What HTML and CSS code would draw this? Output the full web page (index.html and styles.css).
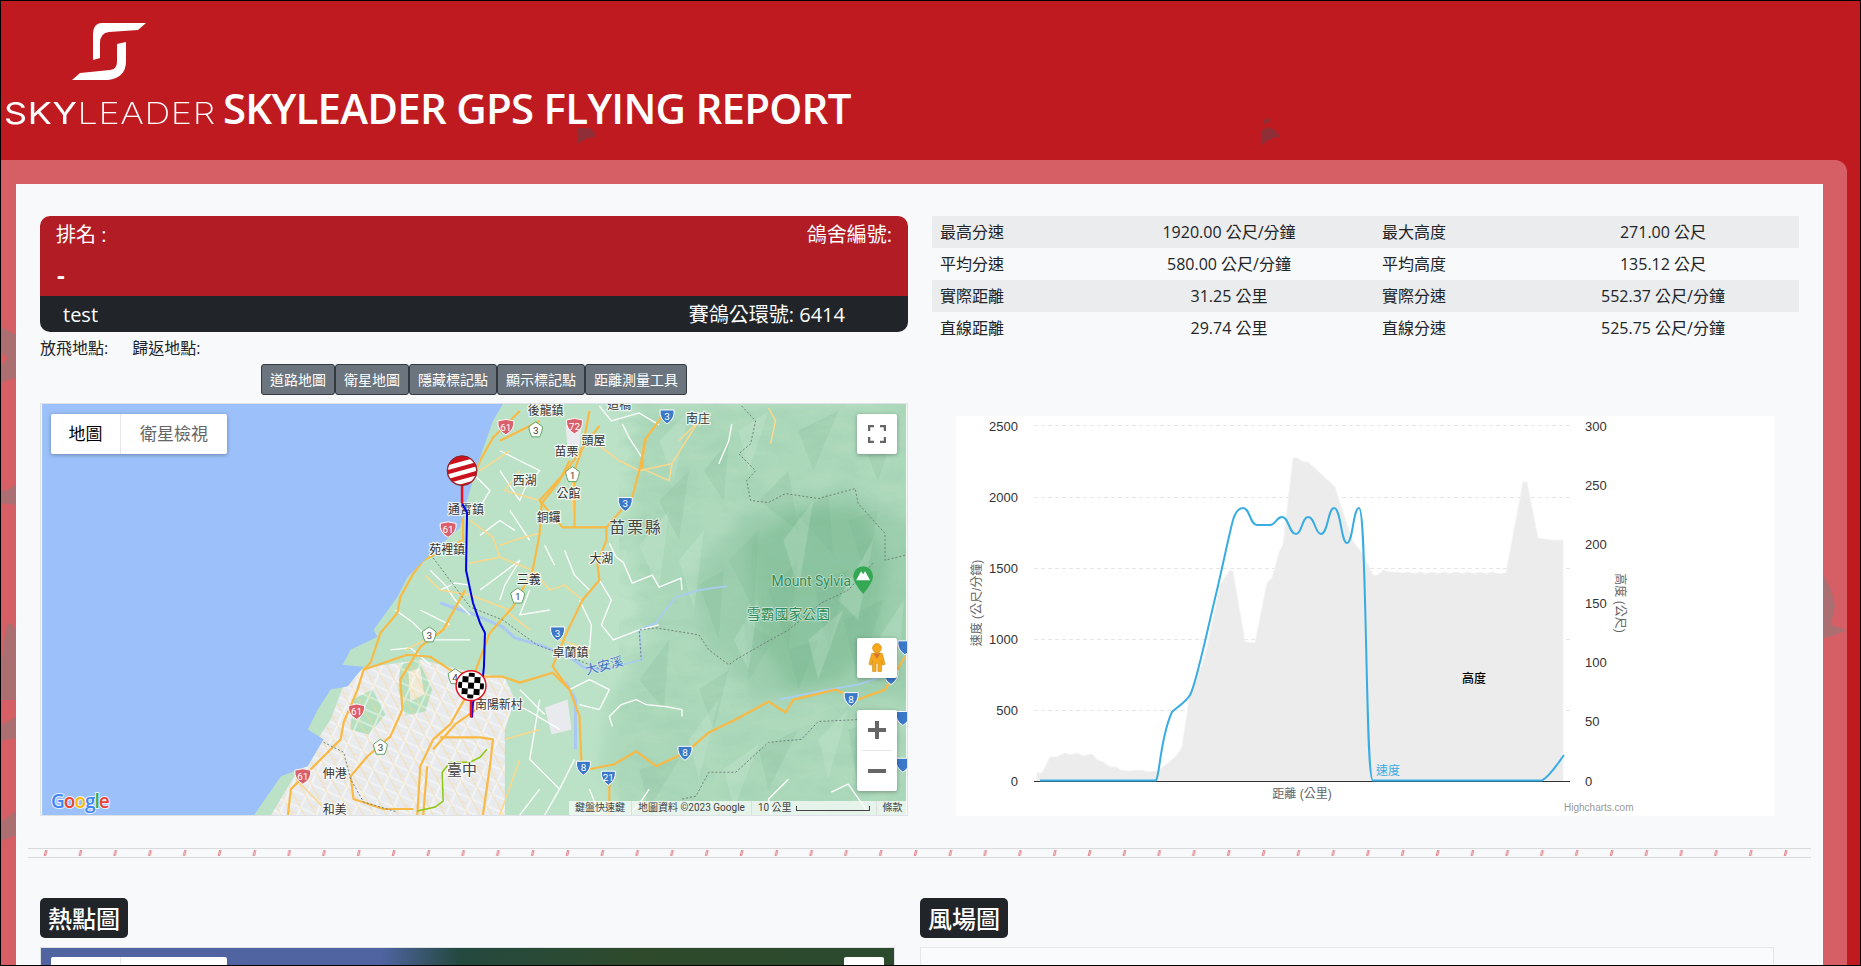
FILE: index.html
```html
<!DOCTYPE html>
<html lang="zh-Hant">
<head>
<meta charset="utf-8">
<title>SKYLEADER GPS FLYING REPORT</title>
<link rel="stylesheet" href="styles.css">
</head>
<body>
<div class="frame">
  <svg class="birds" viewBox="0 0 1859 964" aria-hidden="true">
    <g class="bird-dark" transform="translate(-1 -1)">
      <path d="M577 128H588Q595 130 596 137Q585 137 577 145Z"/>
      <path d="M1263 120L1270 118V122L1263 124ZM1262 130L1268 127Q1278 130 1280 137Q1270 137 1262 145Z"/>
    </g>
    <g class="bird-soft" transform="translate(-1 -1)">
      <path d="M1 327L16 335V378Q8 379 1 383V366L8 358L1 352Z"/>
      <path d="M1 491L8 490L16 484V505L1 503Z"/>
      <path d="M2 700V660Q5 625 9 623Q14 625 16 632V700Z"/>
      <path d="M1 725L16 717V738L1 741Z"/>
      <path d="M1 822L16 811V835L1 841Z"/>
      <path d="M1823 575Q1833 590 1835 606L1831 625L1846 630Q1838 635 1823 638Z"/>
    </g>
  </svg>

  <header class="top">
    <div class="brand">
      <svg class="brand-mark" viewBox="72 24 74 58" aria-hidden="true">
        <path d="M146 24H102Q93 24 93 36V61L100 59V44Q100 34 109 33L138 31Z"/>
        <path d="M126 43L117 45V63Q117 70 110 71L80 74L72 81H108Q126 79 126 62Z"/>
      </svg>
      <div class="brand-name">SKY<span class="brand-thin">LEADER</span></div>
    </div>
    <h1 class="title">SKYLEADER GPS FLYING REPORT</h1>
  </header>

  <main class="card">
    <div class="content">
      <section class="overview">
        <div class="col-left">
          <div class="panel">
            <div class="panel-red">
              <div class="panel-row"><span>排名 :</span><span>鴿舍編號:</span></div>
              <div class="panel-row"><span class="dash">-</span></div>
            </div>
            <div class="panel-dark"><span>test</span><span>賽鴿公環號: 6414</span></div>
          </div>
          <div class="places"><span>放飛地點:</span><span>歸返地點:</span></div>
          <div class="btn-row">
            <button class="btn">道路地圖</button><button class="btn">衛星地圖</button><button class="btn">隱藏標記點</button><button class="btn">顯示標記點</button><button class="btn">距離測量工具</button>
          </div>
          <div class="map">
            <svg class="map-svg" viewBox="40 403 868 413" aria-hidden="true">
              <defs>
                <clipPath id="landClip"><path d="M503 403L493 420L480 457L467 500L460 527L427 557L407 577L397 597L373 630L377 637L350 650L342 665L363 667L347 687L330 690L317 710L307 730L323 740L307 767L280 777L253 816H908V403Z"/></clipPath>
                <clipPath id="cityClip"><path d="M345 680L365 668L420 660L470 672L505 678L515 700L505 730L505 816H270L310 750L330 720Z"/></clipPath>
                <filter id="soft" x="-10%" y="-10%" width="120%" height="120%"><feGaussianBlur stdDeviation="7"/></filter>
                <filter id="terrain" x="0" y="0" width="100%" height="100%">
                  <feTurbulence type="fractalNoise" baseFrequency="0.03 0.06" numOctaves="3" seed="11"/>
                  <feComponentTransfer>
                    <feFuncR type="discrete" tableValues="0.3"/>
                    <feFuncG type="discrete" tableValues="0.58"/>
                    <feFuncB type="discrete" tableValues="0.4"/>
                    <feFuncA type="discrete" tableValues="0 0 0 0.06 0.14 0.22 0.3 0.36"/>
                  </feComponentTransfer>
                </filter>
                <pattern id="cityGrid" width="17" height="13" patternUnits="userSpaceOnUse" patternTransform="rotate(24)">
                  <path class="grid-white" d="M0 6H17M8 0V13"/>
                  <path class="grid-orange" d="M0 0L17 13M0 13H6"/>
                </pattern>
                <g id="s-red"><path class="shield-red" d="M-8-6Q0-9 8-6Q9 3 0 8Q-9 3-8-6Z"/></g>
                <g id="s-blue"><path class="shield-blue" d="M-7-6H7Q8 3 0 8Q-8 3-7-6Z"/></g>
                <g id="s-flower"><path class="shield-flower" d="M0-8L3-6L7-3L6 2L4 7H-4L-6 2L-7-3L-3-6Z"/></g>
              </defs>
              <rect class="sea" x="40" y="403" width="868" height="413"/>
              <g clip-path="url(#landClip)">
                <rect class="land" x="240" y="403" width="668" height="413"/>
                <g filter="url(#soft)">
                  <path class="hill" d="M640 403H930V830H640L600 770L610 700L650 640L640 590L630 520Z"/>
                  <path class="hill2" d="M690 580L750 510L850 490L930 530V700L830 695L760 700L705 640Z"/>
                  <path class="hill3" d="M750 540L800 510L860 505L890 560L880 640L840 680L790 690L760 640Z"/>
                </g>
                <rect class="texture" x="620" y="403" width="288" height="413" filter="url(#terrain)"/>
                <g class="facet-d">
                  <path d="M760 500L790 470L800 530Z"/><path d="M800 515L830 492L835 555Z"/><path d="M850 520L880 510L868 575Z"/><path d="M730 560L760 530L755 610Z"/>
                  <path d="M770 590L800 560L790 650Z"/><path d="M815 580L850 570L830 650Z"/><path d="M845 620L885 600L860 680Z"/><path d="M790 650L820 640L800 690Z"/>
                  <path d="M700 585L725 570L720 640Z"/><path d="M745 620L775 640L750 680Z"/><path d="M660 500L690 470L680 540Z"/><path d="M705 470L730 440L725 500Z"/>
                  <path d="M640 680L670 640L665 710Z"/><path d="M700 690L730 670L715 730Z"/><path d="M760 750L800 730L770 790Z"/><path d="M850 730L890 720L860 790Z"/><path d="M640 770L680 760L650 810Z"/><path d="M800 430L840 410L815 470Z"/><path d="M860 430L900 420L880 480Z"/>
                </g>
                <g class="facet-l">
                  <path d="M785 540L815 500L800 590Z"/><path d="M840 600L875 540L860 620Z"/><path d="M735 640L760 600L750 670Z"/><path d="M810 640L845 610L820 680Z"/><path d="M680 560L705 530L695 610Z"/>
                  <path d="M640 545L670 510L660 590Z"/><path d="M690 740L720 700L700 780Z"/><path d="M740 430L770 410L750 470Z"/><path d="M880 640L906 600L900 680Z"/><path d="M820 740L850 710L830 780Z"/><path d="M725 770L760 745L735 810Z"/><path d="M660 440L690 410L675 480Z"/>
                </g>
                <path class="urban" d="M345 680L365 668L420 660L470 672L505 678L515 700L505 730L505 816H270L310 750L330 720Z"/>
                <path class="urban" d="M545 708L568 700L572 730L552 735Z"/>
                <path class="urban" d="M566 425L582 422L580 445L568 448Z"/>
                <path class="park" d="M400 665L418 660L432 690L425 712L405 716L398 690Z"/>
                <path class="park" d="M352 700L372 690L385 715L368 735L350 730Z"/>
                <path class="beige" d="M408 672L420 668L424 695L410 702Z"/>
                <rect class="city-grid" x="270" y="655" width="250" height="165" fill="url(#cityGrid)" clip-path="url(#cityClip)"/>

                <g class="river">
                  <path d="M677 597L665 612L657 623L640 630L643 660L603 670"/>
                  <path d="M677 597L700 590L728 586" />
                  <path d="M780 700L830 690L860 685L890 675"/>
                </g>
                <g class="river-wide">
                  <path d="M603 670L585 668L570 657L540 645L515 638L503 627L470 613L440 603"/>
                  <path d="M566 682L576 700L576 750"/>
                </g>

                <g class="roads-white">
                  <path d="M610 543L617 557L624 562L633 583L653 575L660 587L682 578L683 590"/>
                  <path d="M613 727L610 717L622 705L637 700L647 705L667 707L683 710L683 717"/>
                  <path d="M733 423L730 440L720 463M623 423L630 437L643 457M600 405L612 420L640 412L660 424"/>
                  <path d="M833 793L850 785L870 813M790 780L770 800L772 815M650 790L640 805L630 815M590 790L600 815"/>
                  <path d="M640 630L660 625M600 580L612 600L602 625L614 640L640 630M580 600L592 625L590 650"/>
                  <path d="M430 570L445 585L455 600L470 615M440 590L455 583L470 585M395 610L412 622L430 640L470 640M390 650L410 648L430 665M420 610L450 625"/>
                  <path d="M500 450L520 460L540 470L525 488L520 500L500 470M510 510L520 525L530 540M480 590L500 575L520 560L505 585L500 600M480 535L500 520L515 530M470 470L490 490L478 510"/>
                  <path d="M530 590L520 615L550 610M565 550L575 575L590 590M545 545L555 565"/>
                  <path d="M570 690L590 680L610 690L600 710L580 705M540 700L530 760L560 790L575 760M505 700L530 712L560 730M520 690L545 715M540 790L520 816M560 790L545 816"/>
                </g>
                <g class="roads-thin">
                  <path d="M470 563L485 560L500 557L533 570L550 590L565 585L583 600M470 520L493 537L500 557M500 545L520 538L540 533"/>
                  <path d="M575 527L573 500L573 480M540 500L505 490L520 470M510 450L480 470M600 445L620 460L640 470L673 463"/>
                  <path d="M680 440L700 420L687 440L673 463L670 480L643 468"/>
                  <path d="M770 407L777 420L772 443"/>
                  <path d="M510 610L470 595L440 590L425 575M450 625L425 640L405 650"/>
                  <path d="M540 730L505 740M520 760L500 816M295 780L330 816M505 610L530 630M560 640L590 650"/>
                </g>
                <g class="roads-main">
                  <path d="M520 410L493 437L480 460L463 503L463 540L423 560L412 575L400 597L397 613L380 633L370 663L363 670L357 690L343 723L340 740L313 767L290 790L287 816"/>
                  <path d="M570 460L560 480L542 503L540 533L533 570L513 607L490 633L477 667L470 690L450 725L433 740L420 767L417 816"/>
                  <path d="M647 437L640 470L633 497L607 527L563 527L540 500L567 470L583 447L600 425"/>
                  <path d="M607 527L607 540L598 563L600 580L583 600L567 633L553 667L570 690L580 717L582 763"/>
                  <path d="M465 590L443 630L420 647L400 680L402 710L390 737L367 757L350 777L353 800L383 810L413 810"/>
                  <path d="M363 670L407 655L430 657L453 672L480 677L503 677L520 683L553 673L570 690"/>
                  <path d="M427 767L423 816M440 738H480L493 740L490 767L483 816M483 705L455 725L433 750"/>
                  <path d="M590 770L615 765L637 752L657 767L687 753L710 733L737 720L770 702L787 713L795 700L837 690L860 700L887 690L907 657"/>
                  <path d="M667 410L645 440L643 468M610 780V816"/>
                  <path d="M540 420L500 440M590 410L583 447L575 470L575 527"/>
                </g>
                <path class="metro" d="M417 812L435 808L443 802L442 773L450 763L470 763L480 758L487 750"/>
                <g class="border-line">
                  <path d="M743 405L757 420L752 443L740 453L757 470L748 480L752 500L770 502L787 493L820 498L857 488L860 503L887 533L887 560L907 555"/>
                  <path d="M875 563L850 590L823 603L790 630L763 645L737 660L730 665L710 650L700 635L657 628L640 630L642 660M603 670L570 657L537 645L503 620L470 607L437 563L427 550"/>
                  <path d="M907 718L820 722L803 740L770 743L737 773L710 773L697 797L683 800"/>
                  <path d="M323 743L343 753L350 780L363 803L397 813"/>
                </g>
              </g>

              <use href="#s-red" x="448" y="529"/><use href="#s-red" x="356" y="712"/><use href="#s-red" x="302" y="777"/><use href="#s-red" x="506" y="426"/><use href="#s-red" x="575" y="425"/>
              <use href="#s-flower" x="429" y="635"/><use href="#s-flower" x="380" y="748"/><use href="#s-flower" x="536" y="429"/><use href="#s-flower" x="573" y="474"/><use href="#s-flower" x="518" y="596"/><use href="#s-flower" x="455" y="677"/>
              <use href="#s-blue" x="668" y="415"/><use href="#s-blue" x="626" y="503"/><use href="#s-blue" x="558" y="633"/><use href="#s-blue" x="853" y="699"/><use href="#s-blue" x="686" y="753"/><use href="#s-blue" x="584" y="768"/><use href="#s-blue" x="609" y="778"/><use href="#s-blue" x="905" y="765"/><use href="#s-blue" x="907" y="647"/><use href="#s-blue" x="893" y="677"/><use href="#s-blue" x="905" y="718"/>
              <g class="num-white">
                <text x="448" y="533">61</text><text x="356" y="716">61</text><text x="302" y="781">61</text><text x="506" y="430">61</text><text x="575" y="429">72</text>
                <text x="668" y="419">3</text><text x="626" y="507">3</text><text x="558" y="637">3</text><text x="853" y="703">8</text><text x="686" y="757">8</text><text x="584" y="772">8</text><text x="609" y="782">21</text>
              </g>
              <g class="num-green">
                <text x="429" y="639">3</text><text x="380" y="752">3</text><text x="536" y="433">3</text><text x="573" y="478">1</text><text x="518" y="600">1</text><text x="455" y="681">4</text>
              </g>

              <g class="lbl">
                <text x="448" y="514">通霄鎮</text><text x="429" y="554">苑裡鎮</text><text x="322" y="779">伸港</text><text x="322" y="815">和美</text>
                <text x="528" y="414">後龍鎮</text><text x="582" y="444">頭屋</text><text x="555" y="455">苗栗</text><text x="513" y="484">西湖</text><text x="557" y="497">公館</text><text x="537" y="522">銅鑼</text>
                <text x="590" y="563">大湖</text><text x="517" y="584">三義</text><text x="553" y="657">卓蘭鎮</text><text x="687" y="422">南庄</text><text x="475" y="709">南陽新村</text><text x="608" y="408">造橋</text>
              </g>
              <text class="lbl-big" x="447" y="776">臺中</text>
              <text class="lbl-county" x="610" y="533">苗栗縣</text>
              <text class="lbl-river" transform="translate(587 675) rotate(-14)">大安溪</text>
              <text class="lbl-park" x="773" y="586">Mount Sylvia</text>
              <text class="lbl-park-cjk" x="748" y="619">雪霸國家公園</text>
              <path class="poi-pin" d="M865 566a10 10 0 0 1 10 10q0 6-10 18q-10-12-10-18a10 10 0 0 1 10-10Z"/>
              <path class="poi-peak" d="M858 580L863 571L865 574L867 571L872 580Z"/>

              <path class="route" d="M462 503L467 512L466 570L473 603L480 623L485 633L484 667L483 677L473 703L472 718"/>
              <path class="pin-line" d="M462 485V503"/>
              <path class="pin-line" d="M471 700V718"/>
              <circle class="m-red" cx="462" cy="470" r="15"/>
              <clipPath id="m1"><circle cx="462" cy="470" r="14"/></clipPath>
              <g clip-path="url(#m1)" class="m-stripes">
                <path d="M444 468L480 458M444 477L480 467M444 486L480 476"/>
              </g>
              <circle class="m-white" cx="471" cy="686" r="15"/>
              <clipPath id="m2"><circle cx="471" cy="686" r="13"/></clipPath>
              <g clip-path="url(#m2)"><g transform="rotate(4 471 686)">
                <path class="m-check" d="M456 671h6v6h-6zM468 671h6v6h-6zM480 671h6v6h-6zM462 677h6v6h-6zM474 677h6v6h-6zM456 683h6v6h-6zM468 683h6v6h-6zM480 683h6v6h-6zM462 689h6v6h-6zM474 689h6v6h-6zM456 695h6v6h-6zM468 695h6v6h-6zM480 695h6v6h-6z"/>
              </g></g>
            </svg>

            <div class="map-type"><span class="mt-on">地圖</span><span class="mt-off">衛星檢視</span></div>
            <div class="map-fs">
              <svg viewBox="0 0 18 18" aria-hidden="true"><path d="M1 6V1H6M12 1H17V6M17 12V17H12M6 17H1V12"/></svg>
            </div>
            <div class="map-peg">
              <svg viewBox="0 0 20 32" aria-hidden="true">
                <circle class="peg-body" cx="10" cy="5" r="5"/>
                <path class="peg-body" d="M4 11Q10 9 16 11L19 23L16 24L15 19V31H11V22H9V31H5V19L4 24L1 23Z"/>
                <path class="peg-neck" d="M6 11H14L10 17Z"/>
              </svg>
            </div>
            <div class="map-zoom">
              <div class="zoom-btn"><svg viewBox="0 0 18 18" aria-hidden="true"><path d="M0 7h7V0h4v7h7v4h-7v7H7v-7H0z"/></svg></div>
              <div class="zoom-btn zoom-minus"><svg viewBox="0 0 18 18" aria-hidden="true"><path d="M0 7h18v4H0z"/></svg></div>
            </div>
            <div class="g-logo"><span class="g-b">G</span><span class="g-r">o</span><span class="g-y">o</span><span class="g-b">g</span><span class="g-g">l</span><span class="g-r">e</span></div>
            <div class="map-attr">
              <span class="attr-item">鍵盤快速鍵</span>
              <span class="attr-item">地圖資料 ©2023 Google</span>
              <span class="attr-item attr-scale">10 公里<i class="scale-bar"></i></span>
              <span class="attr-item">條款</span>
            </div>
          </div>
        </div>

        <div class="col-right">
          <table class="stats">
            <colgroup><col class="c1"><col class="c2"><col class="c3"><col class="c4"></colgroup>
            <tbody>
              <tr><td>最高分速</td><td>1920.00 公尺/分鐘</td><td>最大高度</td><td>271.00 公尺</td></tr>
              <tr><td>平均分速</td><td>580.00 公尺/分鐘</td><td>平均高度</td><td>135.12 公尺</td></tr>
              <tr><td>實際距離</td><td>31.25 公里</td><td>實際分速</td><td>552.37 公尺/分鐘</td></tr>
              <tr><td>直線距離</td><td>29.74 公里</td><td>直線分速</td><td>525.75 公尺/分鐘</td></tr>
            </tbody>
          </table>
          <div class="chart">
            <svg class="chart-svg" viewBox="956 416 819 400" aria-hidden="true">
              <g class="grid">
                <path d="M1034 425.5H1570M1034 497.5H1570M1034 568.5H1570M1034 639.5H1570M1034 710.5H1570"/>
              </g>
              <path class="area" d="M1037 781V773L1042 773L1050 757L1057 757L1065 753L1070 755L1077 753L1083 756L1092 754L1097 760L1103 762L1110 767L1117 767L1120 770L1130 771L1142 770L1147 772L1157 771L1167 764L1177 755L1182 747L1190 693L1203 663L1208 643L1220 585L1230 570L1233 572L1245 642L1255 643L1267 583L1272 578L1280 550L1283 545L1293 458L1297 458L1303 462L1308 462L1320 473L1335 487L1352 540L1362 553L1373 575q5 2 10-5q7 3 14 2q6 2 11 0q6 3 12 0q6 3 12 0q6 3 12 0q6 3 12 0q6 3 12 0q6 3 12 0q6 3 12 0q6 3 14 1L1523 482L1527 482L1538 538L1550 540L1563 540V781Z"/>
              <path class="axis" d="M1034 781.5H1570"/>
              <path class="speed" d="M1040 780.5H1156C1160 775 1160 738 1172 712C1176 708 1186 702 1190 695C1196 685 1205 640 1217 590C1224 560 1229 535 1233 520C1236 510 1240 508 1243 508C1250 508 1250 525 1257 525H1270C1276 525 1276 517 1282 517C1289 517 1289 534 1296 534C1302 534 1302 517 1308 517C1315 517 1315 534 1321 534C1328 534 1328 508 1334 508C1341 508 1341 543 1347 543C1353 543 1353 508 1359 508C1363 508 1364 560 1366 640C1368 730 1369 780.5 1373 780.5H1542C1550 776 1556 766 1564 755"/>
              <g class="tick tick-left">
                <text x="1018" y="431">2500</text><text x="1018" y="502">2000</text><text x="1018" y="573">1500</text><text x="1018" y="644">1000</text><text x="1018" y="715">500</text><text x="1018" y="786">0</text>
              </g>
              <g class="tick">
                <text x="1585" y="431">300</text><text x="1585" y="490">250</text><text x="1585" y="549">200</text><text x="1585" y="608">150</text><text x="1585" y="667">100</text><text x="1585" y="726">50</text><text x="1585" y="786">0</text>
              </g>
              <text class="ax-title" transform="translate(981 603) rotate(-90)">速度 (公尺/分鐘)</text>
              <text class="ax-title" transform="translate(1616 603) rotate(90)">高度 (公尺)</text>
              <text class="ax-title" x="1302" y="798">距離 (公里)</text>
              <text class="s-alt" x="1474" y="683">高度</text>
              <text class="s-speed" x="1376" y="775">速度</text>
              <text class="credit" x="1564" y="811">Highcharts.com</text>
            </svg>
          </div>
        </div>
      </section>

      <svg class="divider" aria-hidden="true">
        <defs>
          <pattern id="slash" width="34.8" height="8" patternUnits="userSpaceOnUse" x="15">
            <path class="slash-mark" d="M4 1L2.6 7M2.6 1L1.2 7"/>
          </pattern>
        </defs>
        <rect class="divider-fill" width="100%" height="8"/>
      </svg>

      <section class="lower">
        <div>
          <h2 class="badge">熱點圖</h2>
          <div class="sat">
            <div class="sat-type"><span></span><span></span></div>
            <div class="sat-btn"></div>
          </div>
        </div>
        <div>
          <h2 class="badge">風場圖</h2>
          <div class="wind"></div>
        </div>
      </section>
    </div>
  </main>
</div>
</body>
</html>
```

FILE: styles.css
```css
* { box-sizing: border-box; }
html, body { margin: 0; padding: 0; }
body { font-family: "Open Sans", "Noto Sans CJK TC", sans-serif; color: #212529; background: #000; }

.frame {
  position: relative;
  height: 966px;
  border: 1px solid #000;
  background: #c01a21;
  overflow: hidden;
  display: flex;
  flex-direction: column;
}
.birds { position: absolute; left: 0; top: 0; width: 1859px; height: 964px; z-index: 1; }
.bird-dark { fill: #8e2f37; }
.bird-soft { fill: #ab6f72; }

/* header */
.top { height: 159px; flex: none; display: flex; align-items: flex-end; padding: 0 0 35px 3px; color: #fff; position: relative; z-index: 2; }
.brand { width: 219px; flex: none; display: flex; flex-direction: column; }
.brand-mark { width: 74px; height: 58px; margin: 0 0 20px 68px; fill: #fff; display: block; }
.brand-name { font-family: Inter, sans-serif; font-size: 30px; line-height: 24px; letter-spacing: 0.5px; font-weight: 400; white-space: nowrap; transform: scaleX(1.2); transform-origin: left center; }
.brand-thin { font-weight: 200; }
.title { margin: 0; font-family: "Open Sans", sans-serif; font-weight: 600; font-size: 42px; line-height: 40px; color: #fff; letter-spacing: -0.75px; white-space: nowrap; position: relative; top: 3px; }

/* card */
.card { flex: 1; margin-right: 13px; background: #d55f65; border-radius: 0 12px 0 0; padding: 24px 24px 0 15px; min-height: 0; }
.content { position: relative; z-index: 2; height: 100%; background: #f8f9fa; padding: 32px 24px 0; }
.overview { display: grid; grid-template-columns: 868px 867px; column-gap: 24px; }
.col-left, .col-right { display: flex; flex-direction: column; min-width: 0; }

.panel { border-radius: 10px; overflow: hidden; color: #fff; font-size: 20px; }
.panel-red { background: #b21c24; padding: 0 16px; height: 80px; }
.panel-row { display: flex; justify-content: space-between; height: 40px; line-height: 38px; }
.dash { font-weight: 700; font-size: 24px; margin-left: 1px; }
.panel-dark { background: #212529; height: 36px; line-height: 38px; padding: 0 63px 0 23px; display: flex; justify-content: space-between; }

.places { display: flex; gap: 24px; height: 32px; line-height: 32px; font-size: 16px; }
.btn-row { display: flex; justify-content: center; height: 31px; }
.btn { appearance: none; height: 31px; padding: 0 8px 2px; margin: 0; border: 1px solid #343a40; border-radius: 3px; background: #6c757d; color: #fff; font-family: "Noto Sans CJK TC", sans-serif; font-size: 14px; line-height: 1; }

.map { position: relative; height: 413px; margin-top: 8px; border: 1px solid #dee2e6; overflow: hidden; }
.map-svg { display: block; width: 866px; height: 411px; }
.sea { fill: #9cc0f9; }
.land { fill: #bbe2c6; }
.hill { fill: #aed9bb; }
.hill2 { fill: #9dcfae; }
.hill3 { fill: #8ac39e; }
.facet-d path { fill: #6eae86; opacity: .16; }
.facet-l path { fill: #d0ecd9; opacity: .25; }
.urban { fill: #e8eaed; }
.park { fill: #b4dfc0; }
.beige { fill: #efe9d8; }
.city-grid { opacity: .75; }
.grid-white { fill: none; stroke: #fff; stroke-width: 1.2; }
.grid-orange { fill: none; stroke: #fdd78a; stroke-width: 1; }
.river path { fill: none; stroke: #a9cdf0; stroke-width: 1.8; stroke-linejoin: round; }
.river-wide path { fill: none; stroke: #a9c9f4; stroke-width: 3; stroke-linejoin: round; }
.roads-white path { fill: none; stroke: #fff; stroke-width: 1.3; stroke-linejoin: round; }
.roads-thin path { fill: none; stroke: #fdd78a; stroke-width: 1.5; stroke-linejoin: round; }
.roads-main path { fill: none; stroke: #f8b945; stroke-width: 2.2; stroke-linejoin: round; }
.metro { fill: none; stroke: #8cc814; stroke-width: 1.5; }
.border-line path { fill: none; stroke: #6f7f78; stroke-width: 1; stroke-dasharray: 2 2; }
.shield-red { fill: #d9606a; stroke: #fff; stroke-width: 1; }
.shield-blue { fill: #3b78c8; stroke: #fff; stroke-width: 1; }
.shield-flower { fill: #fff; stroke: #63a267; stroke-width: 1; stroke-linejoin: round; }
.num-white text, .num-green text { font-family: Roboto, sans-serif; font-size: 10px; text-anchor: middle; }
.num-white text { fill: #fff; }
.num-green text { fill: #444; }

.lbl text, .lbl-big, .lbl-county, .lbl-river, .lbl-park, .lbl-park-cjk { font-family: "Noto Sans CJK TC", sans-serif; paint-order: stroke; stroke-linejoin: round; }
.lbl text { font-size: 12px; fill: #333; stroke: rgba(255,255,255,.8); stroke-width: 2.5px; }
.lbl-big { font-size: 15px; fill: #444; stroke: rgba(255,255,255,.8); stroke-width: 2.5px; }
.lbl-county { font-size: 16px; letter-spacing: 2px; fill: #444; stroke: rgba(255,255,255,.6); stroke-width: 2px; }
.lbl-river { font-size: 13px; fill: #3f74c5; stroke: rgba(255,255,255,.4); stroke-width: 1.5px; }
.lbl-park { font-family: Roboto, sans-serif; font-size: 14px; fill: #2e8b57; stroke: rgba(255,255,255,.5); stroke-width: 1.5px; }
.lbl-park-cjk { font-size: 14px; fill: #2e8b57; stroke: rgba(255,255,255,.6); stroke-width: 1.5px; }
.poi-pin { fill: #34a853; }
.poi-peak { fill: #fff; }

.route { fill: none; stroke: #0000e6; stroke-width: 2; stroke-linejoin: round; }
.pin-line { fill: none; stroke: #e3131e; stroke-width: 2.5; }
.m-red { fill: #c9121e; stroke: #7d2a2a; stroke-width: 1; }
.m-stripes path { fill: none; stroke: #fff; stroke-width: 4.5; }
.m-white { fill: #fff; stroke: #e3131e; stroke-width: 1.5; }
.m-check { fill: #000; }

.map-type { position: absolute; left: 10px; top: 10px; display: flex; height: 40px; background: #fff; border-radius: 2px; box-shadow: 0 1px 4px rgba(0,0,0,.3); font-family: "Noto Sans CJK TC", sans-serif; font-size: 17px; line-height: 38px; }
.mt-on { width: 70px; text-align: center; color: #000; border-right: 1px solid #e6e6e6; }
.mt-off { width: 106px; text-align: center; color: #666; }
.map-fs, .map-peg, .map-zoom { position: absolute; right: 10px; width: 40px; background: #fff; border-radius: 2px; box-shadow: 0 1px 4px rgba(0,0,0,.3); }
.map-fs { top: 10px; height: 40px; display: flex; align-items: center; justify-content: center; }
.map-fs svg { width: 18px; height: 18px; fill: none; stroke: #666; stroke-width: 2.5; }
.map-peg { top: 234px; height: 40px; display: flex; align-items: center; justify-content: center; }
.map-peg svg { width: 18px; height: 30px; }
.peg-body { fill: #f5a81c; stroke: #c88716; stroke-width: .6; }
.peg-neck { fill: #d9772a; }
.map-zoom { top: 306px; height: 81px; display: flex; flex-direction: column; padding: 0; }
.zoom-btn { flex: 1; display: flex; align-items: center; justify-content: center; }
.zoom-btn svg { width: 18px; height: 18px; fill: #666; }
.zoom-minus { position: relative; border-top: 1px solid #e6e6e6; margin: 0 5px; }
.g-logo { position: absolute; left: 10px; bottom: 1px; font-family: "Open Sans", sans-serif; font-size: 19px; line-height: 26px; letter-spacing: -1px; font-weight: 600; paint-order: stroke; -webkit-text-stroke: 2px rgba(255,255,255,.75); }
.g-b { color: #4285f4; }
.g-r { color: #ea4335; }
.g-y { color: #fbbc05; }
.g-g { color: #34a853; }
.map-attr { position: absolute; right: 0; bottom: 0; height: 14px; width: 338px; display: flex; background: rgba(255,255,255,.7); font-family: Roboto, "Noto Sans CJK TC", sans-serif; font-size: 10px; line-height: 14px; color: #444; }
.attr-item { padding: 0 6px; border-right: 1px solid #ddd; white-space: nowrap; }
.attr-item:last-child { border-right: 0; }
.attr-scale { display: flex; align-items: center; gap: 4px; }
.scale-bar { display: block; width: 74px; height: 5px; border: 1px solid #444; border-top: 0; }

/* stats */
.stats { width: 867px; height: 128px; border-collapse: collapse; table-layout: fixed; font-size: 16px; }
.c1 { width: 152px; }
.c2 { width: 290px; }
.c3 { width: 153px; }
.c4 { width: 272px; }
.stats td { height: 32px; padding: 0 8px; line-height: 20px; text-align: left; white-space: nowrap; }
.stats td:nth-child(even) { text-align: center; }
.stats tr:nth-child(odd) td { background: #ebeced; }

.chart { margin: 72px 24px 0; height: 400px; background: #fff; }
.chart-svg { display: block; width: 819px; height: 400px; }
.grid path { fill: none; stroke: #e6e6e6; stroke-width: 1; stroke-dasharray: 4 3; }
.area { fill: #ececec; stroke: #f3f3f3; stroke-width: 1; }
.axis { fill: none; stroke: #333; stroke-width: 1; }
.speed { fill: none; stroke: #39ace3; stroke-width: 2; stroke-linejoin: round; }
.tick text { font-family: "Liberation Sans", sans-serif; font-size: 13px; fill: #333; }
.tick-left text { text-anchor: end; }
.ax-title { font-family: "Liberation Sans", "Noto Sans CJK TC", sans-serif; font-size: 12px; fill: #666; text-anchor: middle; }
.s-alt { font-family: "Noto Sans CJK TC", sans-serif; font-size: 12px; fill: #000; text-anchor: middle; font-weight: 500; }
.s-speed { font-family: "Noto Sans CJK TC", sans-serif; font-size: 12px; fill: #39ace3; }
.credit { font-family: "Liberation Sans", sans-serif; font-size: 10px; fill: #999; }

/* divider */
.divider { display: block; width: calc(100% + 24px); height: 10px; margin: 32px -12px 0; border-top: 1px solid #d8d9da; border-bottom: 1px solid #d8d9da; box-sizing: border-box; }
.divider-fill { fill: url(#slash); }
.slash-mark { fill: none; stroke: #d7606a; stroke-width: .8; }

/* lower */
.lower { display: grid; grid-template-columns: 855px 854px; column-gap: 25px; margin-top: 40px; }
.badge { display: inline-block; margin: 0 0 9px; height: 40px; padding: 0 8px; border-radius: 5px; background: #212529; color: #fff; font-family: "Noto Sans CJK TC", sans-serif; font-size: 24px; font-weight: 500; line-height: 40px; vertical-align: top; }
.sat { position: relative; height: 60px; border: 1px solid #dee2e6; background: linear-gradient(90deg, #4f64a0 0, #4f64a0 40%, #24493f 49%, #2e4a2b 70%, #2b4a2e 100%); }
.sat-type { position: absolute; left: 10px; top: 9px; width: 176px; height: 40px; display: flex; background: #fff; border-radius: 2px; }
.sat-type span:first-child { width: 70px; border-right: 1px solid #e6e6e6; }
.sat-btn { position: absolute; right: 10px; top: 9px; width: 40px; height: 40px; background: #fff; border-radius: 2px; }
.wind { height: 60px; border: 1px solid #e4e6e8; background: #fafbfc; }
```
